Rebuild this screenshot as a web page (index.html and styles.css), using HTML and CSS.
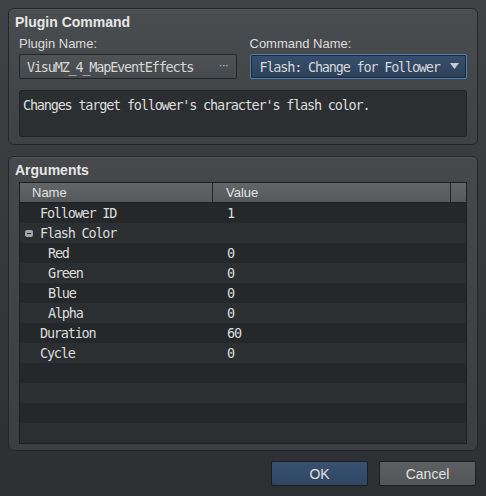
FILE: index.html
```html
<!DOCTYPE html>
<html lang="en">
<head>
    <meta charset="UTF-8">
    <title>Plugin Command</title>
    <link rel="stylesheet" href="styles.css">
</head>
<body>
    <div class="dialog">
        <div class="group group-command">
            <div class="group-title">Plugin Command</div>
            <div class="field-row">
                <div class="field">
                    <div class="label">Plugin Name:</div>
                    <div class="input plugin-input">
                        <span>VisuMZ_4_MapEventEffects</span>
                        <span class="dots">···</span>
                    </div>
                </div>
                <div class="field">
                    <div class="label">Command Name:</div>
                    <div class="input select">
                        <span>Flash: Change for Follower</span>
                        <svg class="arrow" width="9" height="6" viewBox="0 0 9 6"><path d="M0 0H9L4.5 6Z" fill="#c9ccce"/></svg>
                    </div>
                </div>
            </div>
            <div class="description">Changes target follower's character's flash color.</div>
        </div>

        <div class="group group-args">
            <div class="group-title">Arguments</div>
            <div class="table">
                <div class="table-head">
                    <div class="th th-name">Name</div>
                    <div class="th th-value">Value</div>
                    <div class="th th-scroll"></div>
                </div>
                <div class="table-body">
                    <div class="tr"><div class="td name lvl1">Follower ID</div><div class="td value">1</div></div>
                    <div class="tr"><div class="td name lvl1"><span class="toggle"></span>Flash Color</div><div class="td value"></div></div>
                    <div class="tr"><div class="td name lvl2">Red</div><div class="td value">0</div></div>
                    <div class="tr"><div class="td name lvl2">Green</div><div class="td value">0</div></div>
                    <div class="tr"><div class="td name lvl2">Blue</div><div class="td value">0</div></div>
                    <div class="tr"><div class="td name lvl2">Alpha</div><div class="td value">0</div></div>
                    <div class="tr"><div class="td name lvl1">Duration</div><div class="td value">60</div></div>
                    <div class="tr"><div class="td name lvl1">Cycle</div><div class="td value">0</div></div>
                    <div class="tr"></div>
                    <div class="tr"></div>
                    <div class="tr"></div>
                    <div class="tr"></div>
                </div>
            </div>
        </div>

        <div class="buttons">
            <button class="btn btn-ok">OK</button>
            <button class="btn btn-cancel">Cancel</button>
        </div>
    </div>
</body>
</html>
```

FILE: styles.css
```css
html, body {
    margin: 0;
    padding: 0;
}
body {
    width: 486px;
    height: 496px;
    background: linear-gradient(#404345, #2d3032);
    font-family: "Liberation Sans", Arial, sans-serif;
    color: #dcdcdc;
    overflow: hidden;
}
.dialog {
    padding: 8px 8px 0 8px;
    display: flex;
    flex-direction: column;
}
.group {
    border: 1px solid #232527;
    border-radius: 6px;
    background: linear-gradient(#4a4d4f, #3f4244);
    padding: 3px 10px 7px 10px;
    box-shadow: inset 0 1px 0 #55585a;
}
.group-args {
    margin-top: 11px;
    padding-bottom: 6px;
    background: linear-gradient(#46494b, #3c3f41);
}
.group-title {
    font-weight: bold;
    font-size: 14px;
    line-height: 20px;
    margin-left: -4px;
    color: #e6e6e6;
}
.field-row {
    display: flex;
    gap: 13px;
    margin-top: 2px;
}
.field {
    flex: 1;
}
.label {
    font-size: 13px;
    line-height: 20px;
}
.input {
    height: 23px;
    border: 1px solid #222426;
    border-radius: 2px;
    display: flex;
    align-items: center;
    justify-content: space-between;
    font-family: "DejaVu Sans Mono", monospace;
    font-size: 13.5px;
    letter-spacing: -1.2px;
    padding: 0 7px;
    color: #d8d8d8;
}
.plugin-input {
    background: linear-gradient(#505355, #474a4c);
}
.dots {
    letter-spacing: 0;
    font-family: "DejaVu Sans", sans-serif;
    font-size: 10px;
    color: #c8c8c8;
    margin-top: -2px;
}
.select {
    background: linear-gradient(#38506e, #2b405a);
    border-color: #4d80b8;
    box-shadow: inset 0 0 0 1px #1e2a38;
    padding: 0 7px 0 9px;
}
.arrow {
    margin-top: -1px;
}
.description {
    margin-top: 11px;
    height: 47px;
    box-sizing: border-box;
    border: 1px solid #202224;
    border-radius: 3px;
    background: #2c2f31;
    font-family: "DejaVu Sans Mono", monospace;
    font-size: 13.5px;
    letter-spacing: -1.2px;
    padding: 5px 3px 0 3px;
    line-height: 18px;
    color: #dedede;
}
.table {
    margin-top: 2px;
    border: 1px solid #1c1e20;
    background: #25282a;
    height: 260px;
    display: flex;
    flex-direction: column;
}
.table-head {
    display: flex;
    height: 19px;
    border-bottom: 1px solid #1e2022;
    background: linear-gradient(#626668, #55595b);
    font-size: 13px;
    line-height: 19px;
    color: #e2e2e2;
}
.th {
    box-sizing: border-box;
}
.th-name {
    width: 193px;
    padding-left: 12px;
    border-right: 1px solid #222426;
}
.th-value {
    flex: 1;
    padding-left: 13px;
    border-right: 1px solid #222426;
}
.th-scroll {
    width: 15px;
}
.table-body {
    flex: 1;
    overflow: hidden;
}
.tr {
    display: flex;
    height: 20px;
    box-sizing: border-box;
    padding-top: 1px;
    line-height: 19px;
    font-family: "DejaVu Sans Mono", monospace;
    font-size: 13.5px;
    letter-spacing: -1.2px;
    color: #dcdcdc;
}
.tr:nth-child(odd) {
    background: #25282a;
}
.tr:nth-child(even) {
    background: #2c2f31;
}
.td.name {
    width: 193px;
    box-sizing: border-box;
    display: flex;
    align-items: center;
}
.td.value {
    padding-left: 14px;
}
.lvl1 {
    padding-left: 20px;
}
.lvl2 {
    padding-left: 28px;
}
.toggle {
    width: 8px;
    height: 7px;
    margin-left: -15px;
    margin-right: 7px;
    background: #a3a6a8;
    border-radius: 2px;
    position: relative;
}
.toggle::after {
    content: "";
    position: absolute;
    left: 2px;
    right: 2px;
    top: 3px;
    height: 1px;
    background: #25282a;
}
.buttons {
    display: flex;
    justify-content: flex-end;
    gap: 11px;
    margin-top: 10px;
    padding-right: 2px;
}
.btn {
    width: 97px;
    height: 25px;
    border: 1px solid #1c1e20;
    border-radius: 2px;
    font-family: "Liberation Sans", Arial, sans-serif;
    font-size: 14px;
    color: #e0e0e0;
    padding: 0;
}
.btn-ok {
    background: linear-gradient(#3a5272, #2f4562);
}
.btn-cancel {
    background: linear-gradient(#5c6062, #525658);
}
```
